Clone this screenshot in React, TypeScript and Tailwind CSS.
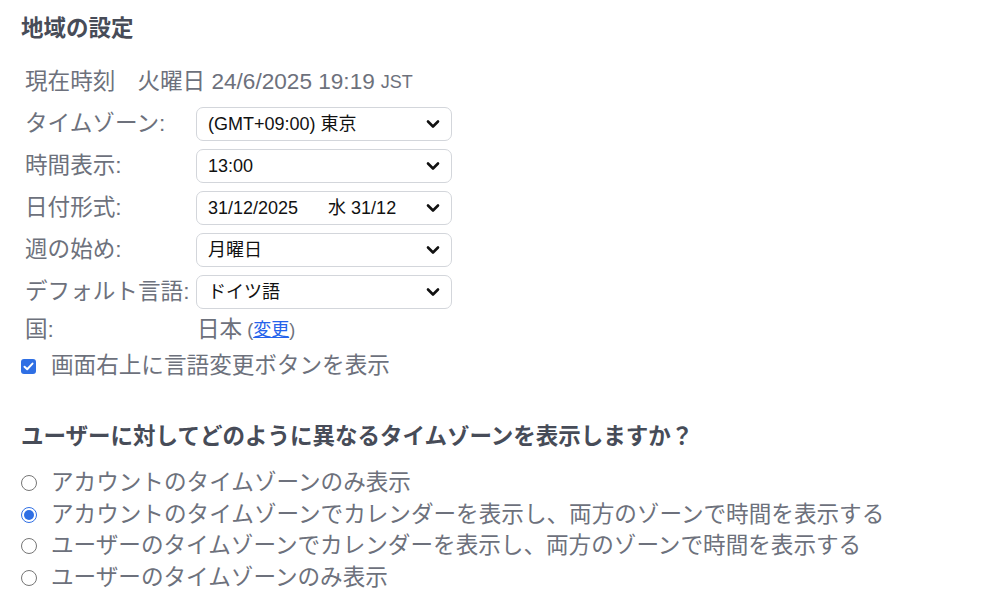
import React from "react";

const FONT = { fontFamily: '"Liberation Sans", "Noto Sans CJK JP", sans-serif' };

function Chevron() {
  return (
    <svg width="14" height="10" viewBox="0 0 14 10" className="shrink-0">
      <path d="M2 2.5 L7 7.5 L12 2.5" fill="none" stroke="#111" strokeWidth="2.6" strokeLinecap="round" strokeLinejoin="round" />
    </svg>
  );
}

function SelectBox({ children }: { children: React.ReactNode }) {
  return (
    <div className="flex h-[34px] w-[256px] items-center justify-between rounded-[7px] border border-[#d3d6db] bg-white pl-[11px] pr-[11px] text-[18px] text-[#111]">
      <span className="whitespace-pre">{children}</span>
      <Chevron />
    </div>
  );
}

function Row({ label, children }: { label: string; children: React.ReactNode }) {
  return (
    <div className="flex h-[34px] items-center">
      <div className="w-[171px] shrink-0 whitespace-nowrap text-[22.6px] text-[#6d717c]">{label}</div>
      {children}
    </div>
  );
}

function Radio({ checked }: { checked?: boolean }) {
  if (checked) {
    return (
      <span className="flex h-[16px] w-[16px] shrink-0 items-center justify-center rounded-full border-[1.5px] border-[#2f6fe4] bg-white">
        <span className="h-[10px] w-[10px] rounded-full bg-[#2f6fe4]" />
      </span>
    );
  }
  return <span className="h-[16px] w-[16px] shrink-0 rounded-full border border-[#767676] bg-white" />;
}

export default function App() {
  const radios = [
    { t: "アカウントのタイムゾーンのみ表示" },
    { t: "アカウントのタイムゾーンでカレンダーを表示し、両方のゾーンで時間を表示する", c: true },
    { t: "ユーザーのタイムゾーンでカレンダーを表示し、両方のゾーンで時間を表示する" },
    { t: "ユーザーのタイムゾーンのみ表示" },
  ];
  return (
    <div className="min-h-[611px] w-full bg-white pl-[21px] pt-[14px]" style={FONT}>
      <h2 className="text-[22.5px] font-bold leading-[30px] text-[#474c58]">地域の設定</h2>
      <div className="mt-[21px] flex flex-col gap-[8px] pl-[4px]">
        <div className="flex h-[34px] items-center whitespace-nowrap text-[22.6px] text-[#6d717c]">
          <span>現在時刻</span>
          <span className="ml-[22px]">火曜日 24/6/2025 19:19</span>
          <span className="ml-[6px] text-[18px]">JST</span>
        </div>
        <Row label="タイムゾーン:">
          <SelectBox>(GMT+09:00) 東京</SelectBox>
        </Row>
        <Row label="時間表示:">
          <SelectBox>13:00</SelectBox>
        </Row>
        <Row label="日付形式:">
          <SelectBox>{"31/12/2025      水 31/12"}</SelectBox>
        </Row>
        <Row label="週の始め:">
          <SelectBox>月曜日</SelectBox>
        </Row>
        <Row label="デフォルト言語:">
          <SelectBox>ドイツ語</SelectBox>
        </Row>
        <div className="flex h-[26px] items-center whitespace-nowrap text-[22.6px] text-[#6d717c]">
          <div className="w-[171px] shrink-0">国:</div>
          <span className="ml-[1px]">日本</span>
          <span className="ml-[5px] text-[18px]">
            (<a href="#" className="text-[#2563eb] underline">変更</a>)
          </span>
        </div>
      </div>
      <div className="mt-[8px] flex h-[30px] items-center">
        <span className="flex h-[15px] w-[15px] shrink-0 items-center justify-center rounded-[3px] bg-[#2f6fe4]">
          <svg width="11" height="9" viewBox="0 0 11 9">
            <path d="M1.5 4.8 L4.2 7.3 L9.5 1.6" fill="none" stroke="white" strokeWidth="2" strokeLinecap="round" strokeLinejoin="round" />
          </svg>
        </span>
        <span className="ml-[15px] whitespace-nowrap text-[22.6px] text-[#6d717c]">画面右上に言語変更ボタンを表示</span>
      </div>
      <h2 className="mt-[41px] whitespace-nowrap text-[22.5px] font-bold leading-[30px] text-[#474c58]">
        ユーザーに対してどのように異なるタイムゾーンを表示しますか？
      </h2>
      <div className="mt-[15px] flex flex-col">
        {radios.map((r, i) => (
          <div key={i} className="flex h-[31.7px] items-center">
            <Radio checked={r.c} />
            <span className="ml-[14px] whitespace-nowrap text-[22.6px] text-[#6d717c]">{r.t}</span>
          </div>
        ))}
      </div>
    </div>
  );
}
